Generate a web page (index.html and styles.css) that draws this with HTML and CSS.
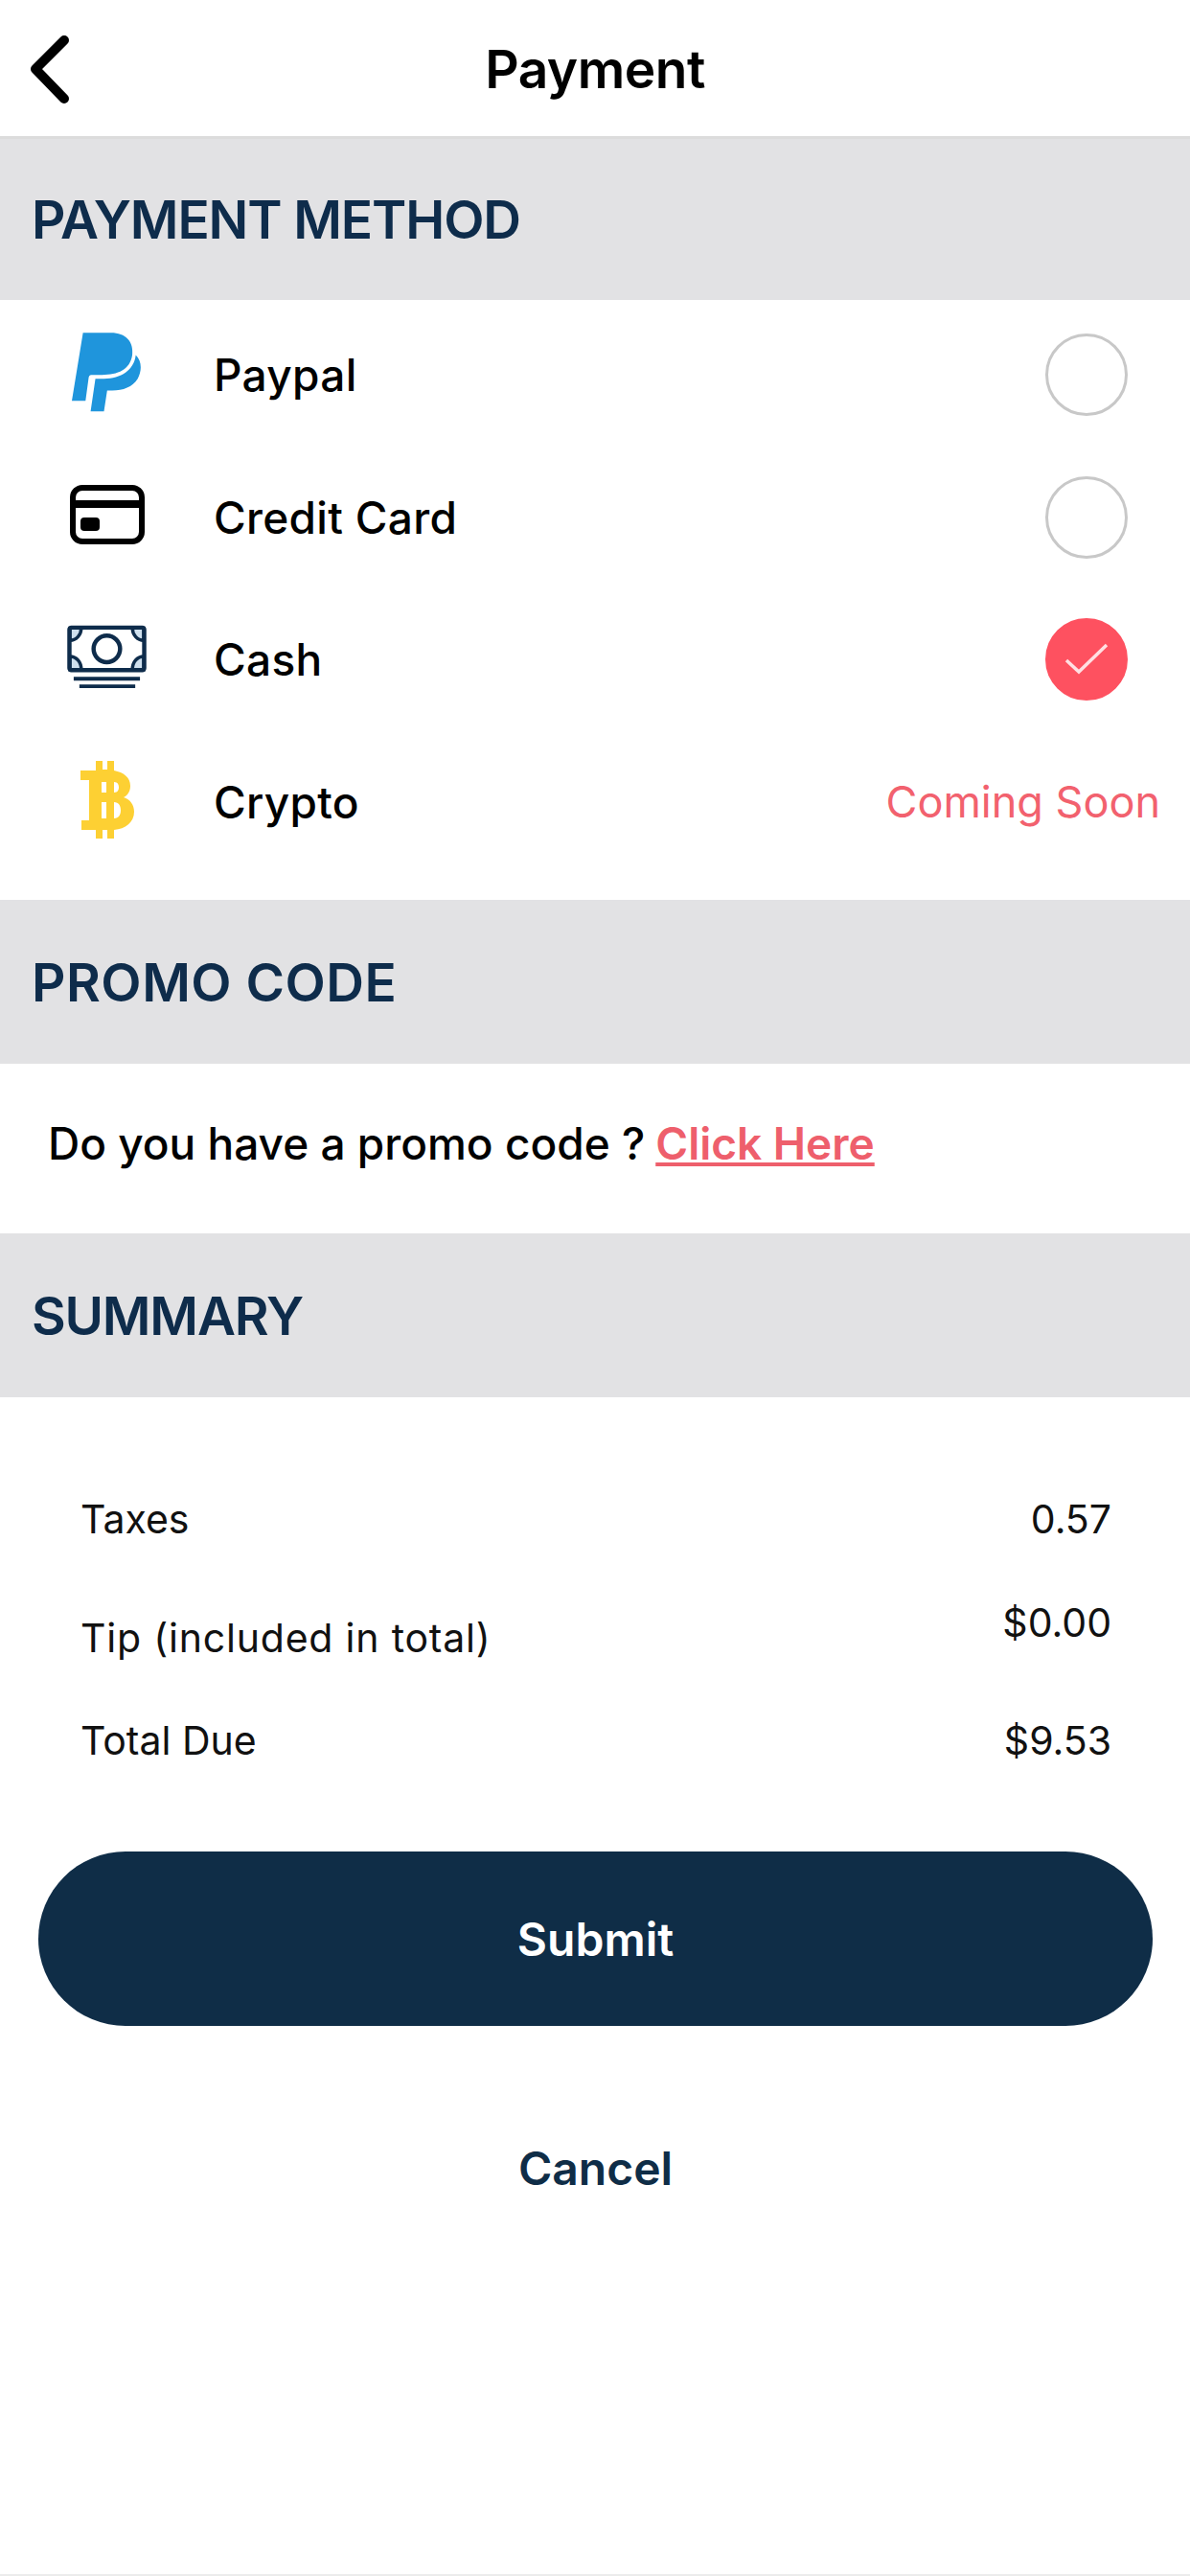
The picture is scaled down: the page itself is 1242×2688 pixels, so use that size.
FILE: index.html
```html
<!DOCTYPE html>
<html lang="en">
<head>
<meta charset="utf-8">
<title>Payment</title>
<link rel="stylesheet" href="styles.css">
</head>
<body>
<div class="screen">
  <header class="nav">
    <svg class="back" viewBox="0 0 44 72" aria-hidden="true"><path d="M37 6 L7 36 L37 67"/></svg>
    <h1 class="nav-title">Payment</h1>
  </header>

  <h2 class="section-head section-head-first">PAYMENT METHOD</h2>
  <div class="methods">
    <div class="method">
      <span class="method-icon">
        <svg class="i-paypal" viewBox="135 82 220 248" aria-hidden="true">
          <path fill="#1f95dc" d="M170 82 L258 82 C305 82 330 110 325 152 C318 198 280 214 230 214 L196 214 C191 214 189 218 188 222 L178 296 L135 296 Z"/>
          <path fill="#1f95dc" d="M336 152 C355 170 356 200 342 226 C326 252 296 263 262 263 L246 263 L236 329 L194 329 L209 226 L236 226 C290 226 330 200 336 152 Z"/>
        </svg>
      </span>
      <span class="method-name">Paypal</span>
      <span class="radio"></span>
    </div>
    <div class="method">
      <span class="method-icon">
        <svg class="i-card" viewBox="0 0 78 62" aria-hidden="true">
          <rect x="3" y="3" width="72" height="56" rx="10" fill="none" stroke="#000" stroke-width="6"/>
          <rect x="3" y="16" width="72" height="8" fill="#000"/>
          <rect x="11" y="34" width="20" height="14" rx="4" fill="#000"/>
        </svg>
      </span>
      <span class="method-name">Credit Card</span>
      <span class="radio"></span>
    </div>
    <div class="method">
      <span class="method-icon">
        <svg class="i-cash" viewBox="0 0 84 67" aria-hidden="true" fill="none" stroke="#0e2c4b" stroke-width="4.500">
          <path class="cash-corner" d="M3 16 C10 16 15 10 15 3 H3 Z M81 16 C74 16 69 10 69 3 H81 Z M3 33 C10 33 15 39 15 47 H3 Z M81 33 C74 33 69 39 69 47 H81 Z"/>
          <rect x="2.500" y="2.500" width="79" height="45" rx="2"/>
          <circle cx="42" cy="25" r="14"/>
          <path d="M7 56.500 H77 M13 64.500 H72" stroke-width="4"/>
        </svg>
      </span>
      <span class="method-name">Cash</span>
      <span class="radio radio-on">
        <svg class="tick" viewBox="0 0 46 36" aria-hidden="true"><path d="M2 19 L15 31 L44 3"/></svg>
      </span>
    </div>
    <div class="method">
      <span class="method-icon">
        <svg class="i-btc" viewBox="0 0 56 81" aria-hidden="true">
          <path fill="#fdd033" fill-rule="evenodd" d="M16 0 H23 V9 H28 V0 H35 V10 C45 12 52 17 52 26 C52 32 49 36 45 38 C52 40 56 46 56 53 C56 64 47 71 35 72 V81 H28 V72 H23 V81 H16 V72 H1 V62 H9 V20 H0 V10 H16 Z M22 22 V33 H27 V22 Z M35 22 V33 C39 33 40 30 40 27.500 C40 25 39 22 35 22 Z M22 43 V60 H27 V43 Z M35 43 V60 C40 60 42 56 42 51.500 C42 47 40 43 35 43 Z"/>
        </svg>
      </span>
      <span class="method-name">Crypto</span>
      <span class="soon">Coming Soon</span>
    </div>
  </div>

  <h2 class="section-head section-head-promo">PROMO CODE</h2>
  <p class="promo">Do you have a promo code ? <a class="promo-link" href="#">Click Here</a></p>

  <h2 class="section-head section-head-summary">SUMMARY</h2>
  <div class="summary">
    <div class="line line-first"><span>Taxes</span><span>0.57</span></div>
    <div class="line"><span class="tip-label">Tip (included in total)</span><span>$0.00</span></div>
    <div class="line"><span>Total Due</span><span>$9.53</span></div>
  </div>

  <div class="actions">
    <button class="submit" type="button">Submit</button>
    <button class="cancel" type="button">Cancel</button>
  </div>
</div>
</body>
</html>
```

FILE: styles.css
```css
* { box-sizing: border-box; }
html, body { margin: 0; padding: 0; background: #fff; }
body { font-family: "Inter", "Liberation Sans", sans-serif; color: #000; }

.screen {
  width: 1242px;
  height: 2688px;
  display: flex;
  flex-direction: column;
  border-bottom: 2px solid #ececec;
  overflow: hidden;
}

.nav {
  height: 145px;
  flex: none;
  display: flex;
  align-items: center;
  justify-content: center;
  position: relative;
  border-bottom: 3px solid #dcdcdc;
}
.back {
  position: absolute;
  left: 30px;
  top: 36px;
  width: 44px;
  height: 72px;
  fill: none;
  stroke: #000;
  stroke-width: 10;
  stroke-linecap: round;
  stroke-linejoin: round;
}
.nav-title { margin: 0; font-size: 55px; font-weight: 600; letter-spacing: -0.5px; position: relative; top: 1px; }

.section-head {
  margin: 0;
  flex: none;
  height: 171px;
  padding-left: 33px;
  display: flex;
  align-items: center;
  background: #e2e2e4;
  color: #0e2c4b;
  font-size: 55px;
  font-weight: 600;
  letter-spacing: -1.1px;
}
.section-head-first { height: 168px; padding-bottom: 1px; }
.section-head-promo { letter-spacing: 0.5px; }
.section-head-summary { letter-spacing: -1.2px; }

.methods { flex: none; height: 626px; padding-top: 4px; }
.method {
  height: 148.500px;
  padding: 0 31px 0 70px;
  display: flex;
  align-items: center;
  gap: 70px;
}
.method-icon { width: 83px; flex: none; display: flex; justify-content: center; margin-bottom: 5px; }
.i-paypal { width: 73px; height: 83px; }
.i-card { width: 78px; height: 62px; }
.i-cash { width: 84px; height: 67px; }
.i-btc { width: 56px; height: 81px; }
.method-name { flex: 1; font-size: 46px; font-weight: 500; letter-spacing: 0.3px; }

.radio {
  width: 86px;
  height: 86px;
  margin-right: 34px;
  border: 3px solid #c8c8c8;
  border-radius: 50%;
  display: flex;
  align-items: center;
  justify-content: center;
}
.radio-on { background: #fe5160; border-color: #fe5160; }
.tick { width: 46px; height: 36px; fill: none; stroke: #ffdfe2; stroke-width: 3.500; }
.soon { color: #f2616e; font-size: 45px; }

.promo {
  margin: 0;
  flex: none;
  height: 177px;
  padding: 0 0 12px 50px;
  display: flex;
  align-items: center;
  gap: 0.24em;
  font-size: 46px;
  font-weight: 500;
}
.promo-link { color: #ee5f6c; font-weight: 600; text-decoration: underline; }

.summary { flex: none; height: 474px; padding: 102px 82px 0 84px; }
.line {
  height: 50px;
  margin-bottom: 73px;
  display: flex;
  justify-content: space-between;
  font-size: 41px;
  color: #111;
}
.line-first { margin-bottom: 58px; }
.tip-label { position: relative; top: 16px; letter-spacing: 0.8px; }

.actions { padding: 0 39px 0 40px; display: flex; flex-direction: column; }
.submit, .cancel {
  font-family: inherit;
  font-size: 48px;
  font-weight: 600;
  border: none;
  cursor: pointer;
}
.submit { height: 182px; border-radius: 91px; background: #0f2d47; color: #fff; }
.cancel { margin-top: 58px; height: 180px; background: none; color: #0f2d47; }
.cash-corner { fill: #cfe0ee; stroke-width: 3.500; }
```
